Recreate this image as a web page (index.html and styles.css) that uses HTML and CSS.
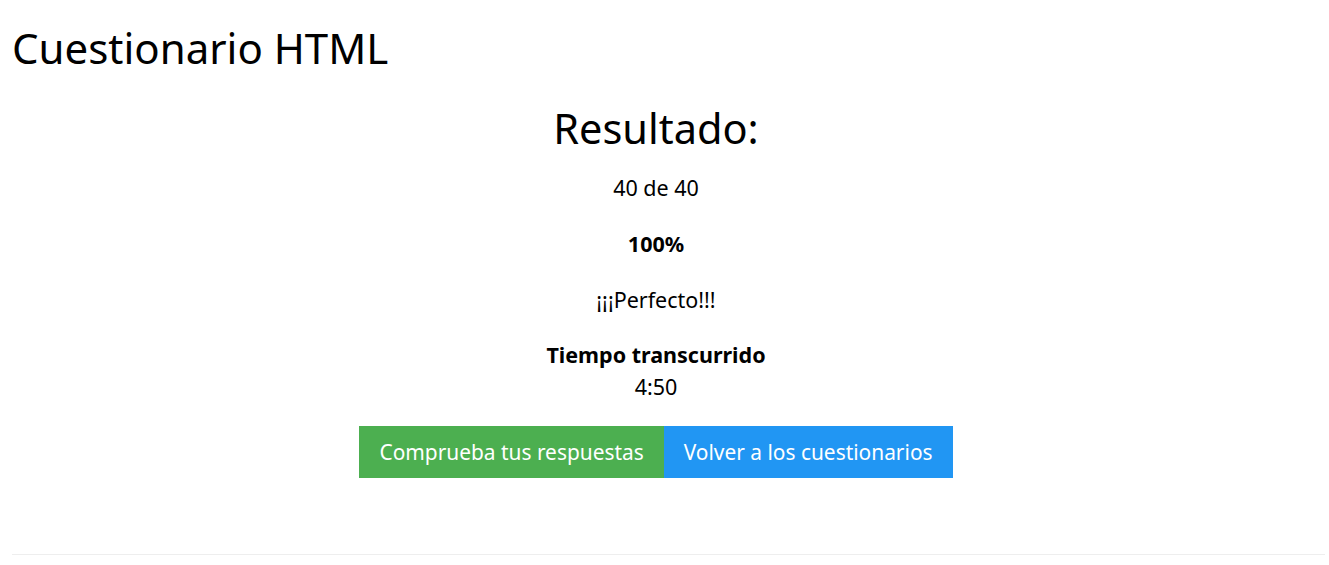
FILE: index.html
```html
<!DOCTYPE html>
<html lang="es">
<head>
<meta charset="utf-8">
<title>Cuestionario HTML</title>
<link rel="stylesheet" href="styles.css">
</head>
<body>
<div class="page">
  <h1 class="title">Cuestionario HTML</h1>
  <div class="result">
    <h2 class="result-heading">Resultado:</h2>
    <p class="line">40 de 40</p>
    <p class="line strong">100%</p>
    <p class="line">¡¡¡Perfecto!!!</p>
    <div class="time">
      <div class="strong">Tiempo transcurrido</div>
      <div>4:50</div>
    </div>
    <div class="buttons">
      <a class="btn btn-green" href="#">Comprueba tus respuestas</a>
      <a class="btn btn-blue" href="#">Volver a los cuestionarios</a>
    </div>
  </div>
  <hr class="rule">
</div>
</body>
</html>
```

FILE: styles.css
```css
html, body {
  margin: 0;
  padding: 0;
  background: #fff;
  color: #000;
  font-family: "Noto Sans", "Open Sans", sans-serif;
}

.page {
  padding: 0 4px 0 12px;
}

.title {
  margin: 0;
  padding-top: 22px;
  font-size: 42px;
  font-weight: 400;
  line-height: 52px;
}

.result {
  padding-right: 25px;
  text-align: center;
  font-size: 21.5px;
}

.result-heading {
  margin: 0;
  padding-top: 28px;
  font-size: 41.5px;
  font-weight: 400;
  line-height: 52px;
}

.line {
  margin: 12px 0 0;
  line-height: 44px;
}

.strong {
  font-weight: 700;
}

.time {
  margin-top: 17px;
  line-height: 32px;
}

.buttons {
  display: flex;
  justify-content: center;
  margin-top: 23px;
}

.btn {
  display: block;
  padding: 0 20px;
  height: 52px;
  line-height: 52px;
  color: #fff;
  text-decoration: none;
  font-size: 20.9px;
}

.btn-green {
  background: #4caf50;
}

.btn-blue {
  background: #2196f3;
}

.rule {
  margin: 76px 0 0;
  border: 0;
  border-top: 1px solid #eee;
}
```
